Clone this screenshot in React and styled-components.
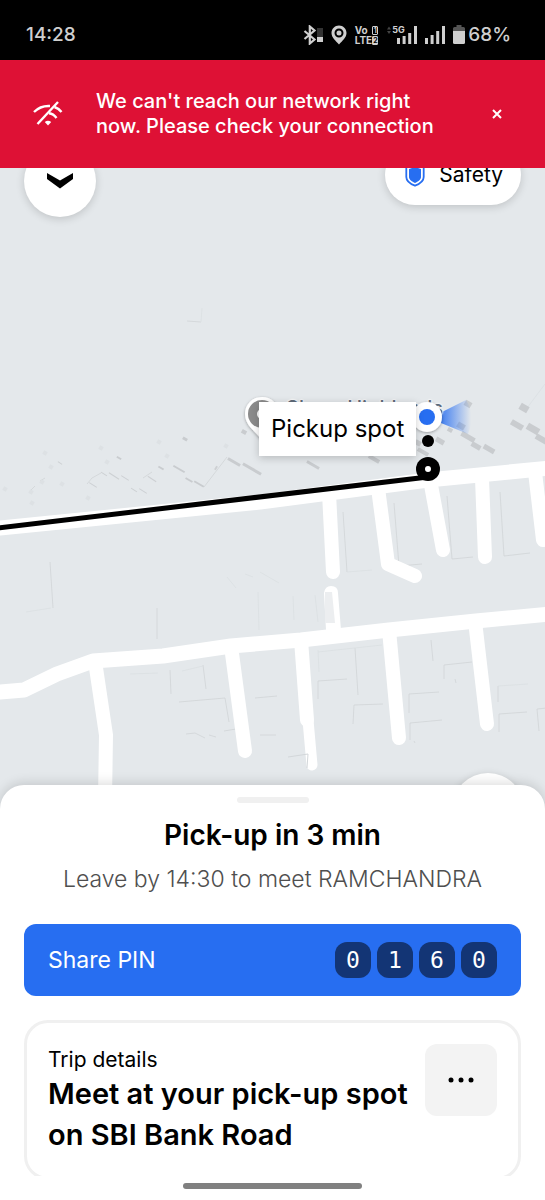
import React from "react";
import styled, { createGlobalStyle } from "styled-components";

const colors = {
  red: "#de1135",
  blue: "#276ef1",
  navy: "#133575",
  map: "#e4e8eb",
  line: "#f0f0f0",
  grey: "#4f4f4f",
  status: "#cfcfcf",
};

const pin = ["0", "1", "6", "0"];

const mainRoads = [
  "M-10 529 L0 528 L260 502 L428 480 L560 467",
  "M-10 693 L0 692 L24 690 L57 674 L93 661 L163 656 L231 646 L301 640 L389 630 L476 621 L560 613",
];

const sideRoads = [
  "M329 493 L333 572",
  "M378 488 L388 564 L415 576",
  "M431 485 L443 550",
  "M482 478 L485 557",
  "M535 472 L543 540",
  "M95 661 L106 735 L105 800",
  "M231 646 L245 751",
  "M301 640 L307 720",
  "M389 630 L399 738",
  "M475 621 L487 724",
];

// x, y, width, height
const buildings = [
  [468, 404, 7, 6],
  [524, 408, 9, 7],
  [517, 425, 13, 6],
  [533, 429, 13, 7],
  [543, 440, 16, 6],
  [461, 426, 8, 6],
  [468, 437, 15, 5],
  [476, 446, 10, 5],
  [489, 449, 12, 5],
  [450, 430, 5, 4],
  [440, 441, 9, 5],
  [423, 452, 12, 4],
  [418, 443, 6, 5],
  [374, 459, 12, 4],
  [313, 465, 14, 3],
  [252, 469, 21, 3],
  [234, 462, 14, 3],
  [244, 432, 5, 4],
  [185, 439, 5, 3],
  [179, 469, 13, 2],
  [189, 480, 8, 2],
  [199, 484, 11, 2],
  [161, 468, 6, 2],
  [119, 458, 5, 2],
];

const sheds = [
  [114, 476, 12, 1],
  [125, 478, 9, 1],
  [152, 479, 10, 1],
  [143, 491, 9, 1],
  [134, 490, 7, 1],
  [104, 474, 7, 1],
  [93, 485, 9, 1],
  [216, 468, 2, 4],
  [60, 463, 5, 1],
];

const blobs = [
  [32, 503],
  [31, 492],
  [42, 482],
  [45, 453],
  [51, 467],
  [62, 484],
  [88, 498],
  [101, 448],
  [107, 462],
  [167, 456],
  [159, 442],
  [5, 489],
  [226, 446],
];

const outlines = [
  "M204 487 L227 457",
  "M30 491 L35 486 M40 481 L45 478 M87 484 L92 478 L101 473 M143 478 L152 472",
  "M50 562 L53 608",
  "M157 608 L157 639",
  "M187 321 L201 322",
  "M343 512 L347 572",
  "M394 503 L399 566 L422 564",
  "M447 496 L452 559 L473 557",
  "M500 492 L504 556 L530 553",
  "M170 670 L171 694 M203 665 L206 689",
  "M179 702 L225 698 L229 722 M228 665 L231 691",
  "M186 734 L195 733 L205 738 M209 735 L216 737 M224 731 L236 729",
  "M255 698 L277 696 M260 735 L276 735",
  "M355 648 L358 695",
  "M318 699 L318 681 L347 679 M353 724 L354 705 L383 704",
  "M431 640 L433 661 M444 679 L444 665 L472 662 M455 679 L456 683",
  "M409 713 L409 694 L439 692 M410 740 L410 723 L442 720 M414 741 L415 743",
  "M498 702 L498 686 M499 732 L499 714 L527 712",
  "M539 731 L537 709 L547 708",
];

const faintOutlines = [
  "M201 322 L202 308",
  "M26 612 L51 608",
  "M227 577 L236 588 M245 574 L253 577 M260 572 L279 583",
  "M258 592 L259 630 M293 596 L294 620 M315 595 L318 622",
  "M347 572 L372 570",
  "M527 408 L545 384",
  "M130 674 L158 673 M182 671 L203 666",
  "M318 650 L319 672 M318 652 L382 645",
  "M498 686 L528 684",
];

function StatusBar() {
  return (
    <StatusWrapper>
      <StatusText>14:28</StatusText>
      <StatusIcons>
        <svg width="20" height="20" viewBox="0 0 20 20">
          <path
            d="M1.5 6 L11.5 14.5 L6.8 18.5 V1.5 L11.5 5.5 L1.5 14"
            fill="none"
            stroke={colors.status}
            strokeWidth="2.200"
          />
          <rect x="14" y="3" width="6" height="10" fill="#333" />
          <rect x="14" y="12" width="6" height="5" fill={colors.status} />
        </svg>
        <svg width="16" height="20" viewBox="0 0 16 20">
          <path
            d="M8 .5 C3.8 .5 .5 3.8 .5 8 C.5 12.5 4.5 15.5 8 19.5 C11.5 15.5 15.5 12.5 15.5 8 C15.5 3.8 12.2 .5 8 .5Z"
            fill={colors.status}
          />
          <circle cx="8" cy="8" r="3.5" fill={colors.status} stroke="#000" strokeWidth="2" />
        </svg>
        <Volte>
          <VolteRow>
            Vo <Sim>1</Sim>
          </VolteRow>
          <VolteRow>
            LTE<Sim $filled>2</Sim>
          </VolteRow>
        </Volte>
        <Signal>
          <svg width="6" height="20" viewBox="0 0 6 20">
            <path d="M1 4.500 L3 1.500 L5 4.500Z M1 6 H5 L3 9Z" fill="#444" />
          </svg>
          <NetworkType>5G</NetworkType>
          <Bars short />
        </Signal>
        <Bars />
        <Battery>
          <svg width="12" height="20" viewBox="0 0 12 20">
            <path d="M3.500 0 H8.500 V2 H10.500 Q12 2 12 3.500 V7 H0 V3.500 Q0 2 1.500 2 H3.500Z" fill="#555" />
            <path d="M0 6 H12 V17.500 Q12 19 10.500 19 H1.500 Q0 19 0 17.500Z" fill={colors.status} />
          </svg>
          <StatusText>68%</StatusText>
        </Battery>
      </StatusIcons>
    </StatusWrapper>
  );
}

function Bars({ short }) {
  return (
    <svg width="20" height="20" viewBox="0 0 20 20">
      <g fill={colors.status}>
        <rect x="0" y="13" width="3" height="6" />
        <rect x="5.600" y={short ? 11 : 10} width="3" height={short ? 8 : 9} />
        <rect x="11.200" y={short ? 8 : 6} width="3" height={short ? 11 : 13} />
        <rect x="17" y="1" width="3" height="18" />
      </g>
    </svg>
  );
}

function NetworkBanner() {
  return (
    <BannerWrapper role="alert">
      <svg width="32" height="28" viewBox="0 0 32 28" fill="none" stroke="#fff" strokeWidth="2.400">
        <path d="M2 12 C6.500 7.500 12 5.600 18 6" />
        <path d="M5.500 24 L26 2" />
        <path d="M22.500 7 C25.500 8 27.600 9.600 29.500 12" />
        <path d="M17 13.300 C20 13.700 22.500 15.300 24.500 18" />
        <path d="M12.800 22 Q16 19.400 19.200 22 L16 25.500Z" fill="#fff" stroke="none" />
      </svg>
      <BannerText>
        We can't reach our network right now. Please check your connection
      </BannerText>
      <CloseBtn aria-label="Dismiss">
        <svg width="10" height="10" viewBox="0 0 10 10">
          <path d="M1 1 L9 9 M9 1 L1 9" stroke="#fff" strokeWidth="2" />
        </svg>
      </CloseBtn>
    </BannerWrapper>
  );
}

function MapView() {
  return (
    <MapWrapper>
      <MapCanvas viewBox="0 168 545 641" preserveAspectRatio="xMidYMin slice">
        <g fill="none" stroke="#d0d4d7" strokeWidth="0.800">
          {outlines.map((d) => (
            <path key={d} d={d} />
          ))}
        </g>
        <g fill="none" stroke="#dbdfe2" strokeWidth="0.800">
          {faintOutlines.map((d) => (
            <path key={d} d={d} />
          ))}
        </g>
        <g fill="#c9cccf">
          {buildings.map(([x, y, w, h]) => (
            <rect
              key={`${x}-${y}`}
              x={x - w / 2}
              y={y - h / 2}
              width={w}
              height={h}
              transform={`rotate(30 ${x} ${y})`}
            />
          ))}
        </g>
        <g fill="#cdd0d3">
          {sheds.map(([x, y, w, h]) => (
            <rect
              key={`${x}-${y}`}
              x={x - w / 2}
              y={y - h / 2}
              width={w}
              height={h}
              transform={`rotate(33 ${x} ${y})`}
            />
          ))}
        </g>
        <g fill="#dde1e4">
          {blobs.map(([x, y]) => (
            <rect key={`${x}-${y}`} x={x - 2} y={y - 2} width="4" height="4" transform={`rotate(30 ${x} ${y})`} />
          ))}
        </g>
        <g fill="none" stroke="#fff" strokeLinecap="round" strokeLinejoin="round">
          {mainRoads.map((d) => (
            <path key={d} d={d} strokeWidth="15" />
          ))}
          {sideRoads.map((d) => (
            <path key={d} d={d} strokeWidth="14" />
          ))}
          <path d="M308 720 L312 765" strokeWidth="11" />
        </g>
        <path d="M324 593 Q325 586 331 586 Q338 586 338 593 L341 630 H326Z" fill="#fff" />
        <path d="M325 592 H332 L335 623 H325Z" fill="#eceef0" />
        <path d="M288 757 L308 754 L307 768" fill="none" stroke="#d3d7da" />
        <path d="M-4 528.200 L428 477" stroke="#000" strokeWidth="5" />

        <path
          d="M262 397 C252 397 245 404.500 245 414 C245 425 254 430 262 440 C270 430 279 425 279 414 C279 404.500 272 397 262 397Z"
          fill="#fff"
          filter="url(#lift)"
        />
        <circle cx="262" cy="414" r="14" fill="#8b8b8b" />
        <circle cx="262" cy="414" r="5" fill="#fff" />

        <path d="M436 415 L466 400 Q476 415 468 434 L436 421Z" fill="url(#beam)" />
        <defs>
          <linearGradient id="beam" gradientUnits="userSpaceOnUse" x1="436" y1="0" x2="471" y2="0">
            <stop offset="0" stopColor={colors.blue} />
            <stop offset="1" stopColor={colors.blue} stopOpacity="0" />
          </linearGradient>
          <filter id="lift" x="-30%" y="-30%" width="160%" height="160%">
            <feDropShadow dx="0" dy="1" stdDeviation="1.500" floodOpacity="0.350" />
          </filter>
        </defs>
      </MapCanvas>

      <PlaceName>Shree Highlands</PlaceName>
      <MapCanvas viewBox="0 168 545 641" preserveAspectRatio="xMidYMin slice">
        <circle cx="427" cy="417" r="15" fill="#fff" filter="url(#lift)" />
        <circle cx="427" cy="417" r="8" fill={colors.blue} />
        <circle cx="428" cy="441" r="6" fill="#000" />
        <circle cx="428" cy="469" r="12" fill="#000" />
        <circle cx="428" cy="469" r="3" fill="#fff" />
      </MapCanvas>
      <PickupLabel>Pickup spot</PickupLabel>

      <MapControls>
        <RoundBtn aria-label="Collapse">
          <svg width="28" height="16" viewBox="0 0 28 16">
            <path d="M1 0 L14 7.500 L27 0 V6 L14 15.500 L1 6Z" />
          </svg>
        </RoundBtn>
        <SafetyBtn>
          <svg width="20" height="24" viewBox="0 0 20 24">
            <path
              d="M10 1.300 L18.700 4 V14 C18.700 18 14.500 21 10 22.700 C5.500 21 1.300 18 1.300 14 V4Z"
              fill="#fff"
              stroke={colors.blue}
              strokeWidth="1.800"
            />
            <path d="M10 4 L16 6 V14 C16 16.500 13 18.700 10 20 C7 18.700 4 16.500 4 14 V6Z" fill={colors.blue} />
          </svg>
          Safety
        </SafetyBtn>
      </MapControls>
      <RecenterBtn aria-label="Recenter map" />
    </MapWrapper>
  );
}

function TripSheet() {
  return (
    <SheetWrapper>
      <Grip />
      <Title>Pick-up in 3 min</Title>
      <Subtitle>Leave by 14:30 to meet RAMCHANDRA</Subtitle>
      <PinBtn>
        Share PIN
        <PinDigits>
          {pin.map((digit, i) => (
            <Digit key={i}>{digit}</Digit>
          ))}
        </PinDigits>
      </PinBtn>
      <TripCard>
        <TripText>
          <TripLabel>Trip details</TripLabel>
          <TripHeading>Meet at your pick-up spot on SBI Bank Road</TripHeading>
        </TripText>
        <MoreBtn aria-label="More options">
          <svg width="26" height="6" viewBox="0 0 26 6">
            <circle cx="3" cy="3" r="2.500" />
            <circle cx="13" cy="3" r="2.500" />
            <circle cx="23" cy="3" r="2.500" />
          </svg>
        </MoreBtn>
      </TripCard>
    </SheetWrapper>
  );
}

function App() {
  return (
    <Screen>
      <GlobalStyle />
      <StatusBar />
      <NetworkBanner />
      <MapView />
      <TripSheet />
      <HomeBar>
        <HomeHandle />
      </HomeBar>
    </Screen>
  );
}

export default App;

const GlobalStyle = createGlobalStyle`
  * {
    box-sizing: border-box;
  }
  body {
    margin: 0;
    font-family: Inter, Roboto, sans-serif;
    color: #000;
  }
  button {
    border: none;
    padding: 0;
    font-family: inherit;
    color: inherit;
    cursor: pointer;
  }
  h1, h2, p {
    margin: 0;
  }
  svg {
    display: block;
    flex-shrink: 0;
  }
`;

const Screen = styled.div`
  min-height: 100vh;
  display: flex;
  flex-direction: column;
  background-color: #fff;
`;
const StatusWrapper = styled.header`
  height: 60px;
  padding: 10px 34px 0 26px;
  display: flex;
  align-items: center;
  justify-content: space-between;
  background-color: #000;
  color: ${colors.status};
`;
const StatusText = styled.span`
  font-size: 19px;
  line-height: 24px;
  font-weight: 500;
`;
const StatusIcons = styled.div`
  display: flex;
  align-items: center;
  gap: 8px;
`;
const Volte = styled.div`
  display: flex;
  flex-direction: column;
  gap: 1px;
  font-size: 10px;
  line-height: 9px;
  font-weight: 700;
`;
const VolteRow = styled.div`
  display: flex;
  justify-content: space-between;
`;
const Sim = styled.span`
  width: 6px;
  height: 9px;
  font-size: 7px;
  text-align: center;
  border-radius: 1px;
  border: 1px solid ${colors.status};
  line-height: 7px;
  background-color: ${({ $filled }) => ($filled ? colors.status : "transparent")};
  color: ${({ $filled }) => ($filled ? "#000" : colors.status)};
`;
const Signal = styled.div`
  display: flex;
  position: relative;
  gap: 5px;
`;
const NetworkType = styled.span`
  position: absolute;
  left: 6px;
  top: 0;
  font-size: 9px;
  line-height: 9px;
  font-weight: 700;
`;
const Battery = styled.div`
  display: flex;
  align-items: center;
  gap: 3px;
`;

const BannerWrapper = styled.div`
  min-height: 108px;
  padding: 0 32px;
  display: flex;
  align-items: center;
  gap: 32px;
  background-color: ${colors.red};
  color: #fff;
`;
const BannerText = styled.p`
  flex: 1;
  font-size: 20px;
  line-height: 25px;
  font-weight: 500;
`;
const CloseBtn = styled.button`
  width: 32px;
  height: 32px;
  display: flex;
  align-items: center;
  justify-content: center;
  background: none;
`;

const MapWrapper = styled.main`
  position: relative;
  flex: 1 0 400px;
  margin-bottom: -24px;
  overflow: hidden;
  background-color: ${colors.map};
`;
const MapCanvas = styled.svg`
  position: absolute;
  inset: 0;
  width: 100%;
  height: 100%;
`;
const PlaceName = styled.span`
  position: absolute;
  left: 286px;
  top: 228px;
  font-size: 20px;
  line-height: 24px;
  font-weight: 500;
  color: #5f6b7a;
  text-shadow: 0 0 2px #fff, 0 0 2px #fff, 0 0 3px #fff;
`;
const PickupLabel = styled.div`
  position: absolute;
  left: 259px;
  top: 234px;
  padding: 12px;
  font-size: 24px;
  line-height: 30px;
  background-color: #fff;
  box-shadow: 0 2px 8px rgba(0, 0, 0, 0.2);
`;
const MapControls = styled.div`
  position: absolute;
  top: -23px;
  left: 24px;
  right: 24px;
  display: flex;
  justify-content: space-between;
  align-items: flex-start;
`;
const RoundBtn = styled.button`
  width: 72px;
  height: 72px;
  display: flex;
  align-items: center;
  justify-content: center;
  border-radius: 50%;
  background-color: #fff;
  box-shadow: 0 2px 8px rgba(0, 0, 0, 0.16);
`;
const SafetyBtn = styled.button`
  height: 60px;
  padding: 0 18px 0 20px;
  display: flex;
  align-items: center;
  gap: 14px;
  border-radius: 30px;
  background-color: #fff;
  box-shadow: 0 2px 8px rgba(0, 0, 0, 0.16);
  font-size: 21px;
  line-height: 26px;
`;
const RecenterBtn = styled(RoundBtn)`
  position: absolute;
  right: 21px;
  bottom: -36px;
`;

const SheetWrapper = styled.section`
  position: relative;
  padding: 12px 24px 0;
  display: flex;
  flex-direction: column;
  border-radius: 24px 24px 0 0;
  background-color: #fff;
  box-shadow: 0 -2px 12px rgba(0, 0, 0, 0.14);
`;
const Grip = styled.div`
  width: 72px;
  height: 6px;
  align-self: center;
  border-radius: 3px;
  background-color: ${colors.line};
`;
const Title = styled.h1`
  margin-top: 12px;
  font-size: 28px;
  line-height: 40px;
  font-weight: 600;
  text-align: center;
`;
const Subtitle = styled.p`
  margin-top: 8px;
  font-size: 23px;
  line-height: 32px;
  font-weight: 300;
  text-align: center;
  color: ${colors.grey};
`;
const PinBtn = styled.button`
  height: 72px;
  margin-top: 29px;
  padding: 0 24px;
  display: flex;
  align-items: center;
  justify-content: space-between;
  border-radius: 12px;
  background-color: ${colors.blue};
  color: #fff;
  font-size: 23px;
  line-height: 32px;
`;
const PinDigits = styled.span`
  display: flex;
  gap: 6px;
`;
const Digit = styled.span`
  width: 36px;
  height: 36px;
  display: flex;
  align-items: center;
  justify-content: center;
  border-radius: 12px;
  background-color: ${colors.navy};
  font-family: "DejaVu Sans Mono", monospace;
  font-size: 23px;
`;
const TripCard = styled.div`
  margin-top: 24px;
  padding: 21px 21px 22px;
  display: flex;
  align-items: flex-start;
  justify-content: space-between;
  gap: 12px;
  border: 3px solid ${colors.line};
  border-radius: 24px;
`;
const TripText = styled.div`
  padding-top: 3px;
`;
const TripLabel = styled.p`
  font-size: 21px;
  line-height: 26px;
`;
const TripHeading = styled.h2`
  font-size: 29px;
  line-height: 41px;
  font-weight: 600;
`;
const MoreBtn = styled.button`
  width: 72px;
  height: 72px;
  flex-shrink: 0;
  display: flex;
  align-items: center;
  justify-content: center;
  border-radius: 12px;
  background-color: #f3f3f3;
`;
const HomeBar = styled.footer`
  position: relative;
  height: 24px;
  margin-top: -4px;
  display: flex;
  align-items: center;
  justify-content: center;
  background-color: #fff;
`;
const HomeHandle = styled.div`
  width: 33%;
  height: 6px;
  margin-bottom: 4px;
  border-radius: 3px;
  background-color: #808080;
`;
